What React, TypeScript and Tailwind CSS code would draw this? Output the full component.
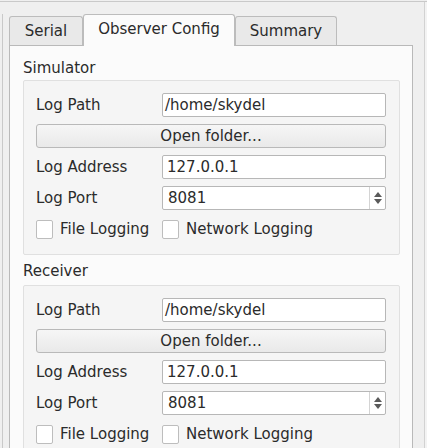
import React from "react";

const labelCls = "h-[24px] flex items-center";
const inputCls =
  "h-[24px] flex items-center bg-white border border-[#b7b7b7] rounded-[2px] pl-[2px]";

function SpinArrows() {
  return (
    <div className="ml-auto h-full w-[16px] border-l border-[#d4d4d4] flex flex-col items-center justify-center gap-[2px]">
      <svg width="8" height="5" viewBox="0 0 8 5">
        <path d="M0 5 L4 0 L8 5 Z" fill="#5a5a5a" />
      </svg>
      <svg width="8" height="5" viewBox="0 0 8 5">
        <path d="M0 0 L8 0 L4 5 Z" fill="#5a5a5a" />
      </svg>
    </div>
  );
}

function Check({ label }: { label: string }) {
  return (
    <div className="h-[24px] flex items-center gap-[7px]">
      <div className="w-[17px] h-[19px] bg-white border border-[#bdbdbd] rounded-[2px]" />
      <span>{label}</span>
    </div>
  );
}

function Group({ title, first }: { title: string; first?: boolean }) {
  return (
    <div>
      <div
        className={
          first
            ? "h-[20px] mt-[12px] mb-[2px] flex items-center"
            : "h-[20px] mt-[6px] mb-[4px] flex items-center"
        }
      >
        {title}
      </div>
      <div className="w-[377px] border border-[#e0e0e0] bg-[#f5f5f5] rounded-[2px] pt-[12px] pb-[13px] pl-[12px] pr-[13px]">
        <div className="grid grid-cols-[126px_1fr] gap-y-[7px]">
          <div className={labelCls}>Log Path</div>
          <div className={inputCls}>/home/skydel</div>
          <button className="col-span-2 h-[24px] flex items-center justify-center border border-[#b9b9b9] rounded-[3px] bg-gradient-to-b from-[#f6f6f6] to-[#e9e9e9]">
            Open folder...
          </button>
          <div className={labelCls}>Log Address</div>
          <div className={inputCls + " pl-[4px]"}>127.0.0.1</div>
          <div className={labelCls}>Log Port</div>
          <div className={inputCls + " pl-[5px]"}>
            <span>8081</span>
            <SpinArrows />
          </div>
          <Check label="File Logging" />
          <Check label="Network Logging" />
        </div>
      </div>
    </div>
  );
}

export default function App() {
  return (
    <div className="w-[427px] h-[448px] overflow-hidden bg-[#efefef] text-[15px] text-[#2b2b2b] font-['DejaVu_Sans',sans-serif] pt-[1px]">
      <div className="h-full border-t border-[#c9c9c9] flex">
        <div className="w-[3px] mt-[12px] border-r border-[#c9c9c9]" />
        <div className="w-[410px] pl-[6px] pt-[12px] flex flex-col">
          <div className="flex items-end h-[31px]">
            <div className="w-[74px] h-[29px] border border-b-0 border-[#bcbcbc] rounded-t-[3px] bg-[#e9e9e9] flex items-center justify-center">
              Serial
            </div>
            <div className="w-[152px] h-[32px] -mb-[1px] relative border border-b-0 border-[#bcbcbc] rounded-t-[3px] bg-[#fbfbfb] flex items-center justify-center pb-[2px]">
              Observer Config
            </div>
            <div className="w-[102px] h-[29px] border border-b-0 border-[#bcbcbc] rounded-t-[3px] bg-[#e9e9e9] flex items-center justify-center">
              Summary
            </div>
          </div>
          <div className="flex-1 border border-[#b9b9b9] bg-[#fbfbfb] pl-[13px] pr-[13px]">
            <Group title="Simulator" first />
            <Group title="Receiver" />
          </div>
        </div>
        <div className="w-[11px]" />
        <div className="w-[1px] bg-[#d2d2d2]" />
        <div className="flex-1 bg-[#f3f3f3]" />
      </div>
    </div>
  );
}
